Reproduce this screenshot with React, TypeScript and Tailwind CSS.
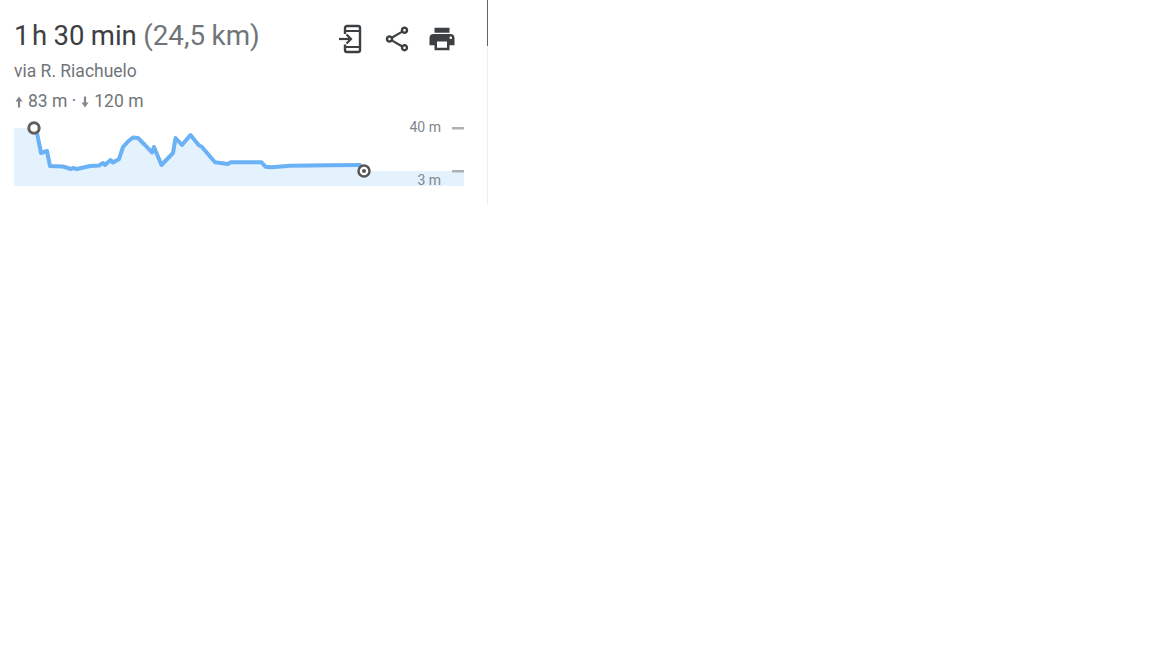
export default function App() {
  const line =
    "37,133 41,153 47,151 50,166 63,166.5 71,169 73,168 77,169 90,166 99,165.5 103,163 105,165 110.5,160 113,162.5 119,159 123,147 128,141.5 133,137.5 138,138 145,145 152,152.5 154,147 161.5,165 173,153 175.5,138 182,145 190.5,135 199,145.5 201.5,146.5 215,162.3 228,164 230.5,162.3 261.5,162.3 265.5,166.7 271.5,167.3 290,165.7 330,165.3 360,165";
  const off = (s: string) =>
    s
      .split(" ")
      .map((p) => {
        const [x, y] = p.split(",").map(Number);
        return `${x - 14},${y - 120}`;
      })
      .join(" ");
  return (
    <div className="w-[1152px] h-[648px] bg-white overflow-hidden font-['Roboto',sans-serif]">
      <div className="flex w-[488px] h-[205px]">
        <div className="flex-1 flex flex-col pl-[14px] pt-[19px]">
          <div className="flex items-start justify-between h-[34px]">
            <div className="text-[27.5px] leading-[34px] text-[#3c4043] whitespace-nowrap [word-spacing:-0.4px]">
              <span className="[word-spacing:-4.4px]">1 h</span> 30 min{" "}
              <span className="text-[#70757a] text-[27.8px]">(24,5 km)</span>
            </div>
            <div className="flex items-center mr-[30px] mt-[4px] gap-[15px] text-[#3c4043]">
              <svg width="24" height="30" viewBox="0 0 24 30" fill="none" className="mr-[4px] mt-[1px]">
                <path d="M6 10V4a2 2 0 0 1 2-2h11a2 2 0 0 1 2 2v22a2 2 0 0 1-2 2H8a2 2 0 0 1-2-2v-5.500" stroke="currentColor" strokeWidth="2.400" />
                <path d="M6 7h15M6 23h15" stroke="currentColor" strokeWidth="2" />
                <path d="M0 15h11" stroke="currentColor" strokeWidth="2.200" />
                <path d="M7.500 10.500 12 15l-4.500 4.500" stroke="currentColor" strokeWidth="2.200" />
              </svg>
              <svg width="30" height="30" viewBox="0 0 24 24" fill="currentColor" className="mt-[1px]">
                <path d="M18 16.08c-.76 0-1.44.3-1.96.77L8.91 12.7c.05-.23.09-.46.09-.7s-.04-.47-.09-.7l7.05-4.11c.54.5 1.25.81 2.04.81 1.66 0 3-1.34 3-3s-1.34-3-3-3-3 1.34-3 3c0 .24.04.47.09.7L8.04 9.81C7.5 9.31 6.79 9 6 9c-1.66 0-3 1.34-3 3s1.34 3 3 3c.79 0 1.5-.31 2.04-.81l7.12 4.16c-.05.21-.08.43-.08.65 0 1.61 1.31 2.92 2.92 2.92s2.92-1.31 2.92-2.92-1.31-2.92-2.92-2.92zM18 4c.55 0 1 .45 1 1s-.45 1-1 1-1-.45-1-1 .45-1 1-1zM6 13c-.55 0-1-.45-1-1s.45-1 1-1 1 .45 1 1-.45 1-1 1zm12 7.020c-.55 0-1-.45-1-1s.45-1 1-1 1 .45 1 1-.45 1-1 1z" />
              </svg>
              <svg width="30" height="30" viewBox="0 0 24 24" fill="currentColor" className="mt-[1px]">
                <path d="M19 8H5c-1.660 0-3 1.340-3 3v6h4v4h12v-4h4v-6c0-1.660-1.340-3-3-3zm-3 11H8v-5h8v5zm3-7c-.55 0-1-.45-1-1s.45-1 1-1 1 .45 1 1-.45 1-1 1zm-1-9H6v4h12V3z" />
              </svg>
            </div>
          </div>
          <div className="mt-[5px] text-[17.5px] leading-[26px] text-[#70757a]">via R. Riachuelo</div>
          <div className="mt-[4px] flex items-center text-[17.5px] leading-[26px] text-[#70757a]">
            <svg width="10" height="14" viewBox="0 0 10 14" fill="#80868b" className="mr-[4px] mt-[2px]">
              <path d="M5 1.500 8.500 6.500H6.100V12.500H3.900V6.500H1.500z" />
            </svg>
            83 m ·
            <svg width="10" height="14" viewBox="0 0 10 14" fill="#80868b" className="mx-[4px] mt-[2px]">
              <path d="M5 12.500 8.500 7.500H6.100V1.500H3.900V7.500H1.500z" />
            </svg>
            120 m
          </div>
          <div className="relative w-[450px] h-[66px] mt-[6px]">
            <svg width="450" height="66" viewBox="0 0 450 66" className="block overflow-visible">
              <polygon
                points={`0,8 ${off("34,128")} ${off(line)} ${off("364,171")} 450,51 450,66 0,66`}
                fill="#e3f2fd"
              />
              <polyline points={off(line)} fill="none" stroke="#6ab1f5" strokeWidth="4" strokeLinejoin="round" strokeLinecap="round" />
              <circle cx="20" cy="8" r="5.200" fill="#fff" stroke="#5f5f5f" strokeWidth="3" />
              <circle cx="350" cy="51" r="5.500" fill="#fff" stroke="#555" strokeWidth="2.500" />
              <circle cx="350" cy="51" r="2" fill="#555" />
              <rect x="438" y="7" width="12" height="2.500" fill="#b0b0b0" />
              <rect x="438" y="50" width="12" height="2.500" fill="#b0b0b0" />
            </svg>
            <span className="absolute right-[23px] top-[-2px] text-[14px] leading-[18px] text-[#80868b]">40 m</span>
            <span className="absolute right-[23px] top-[51px] text-[14px] leading-[18px] text-[#80868b]">3 m</span>
          </div>
        </div>
        <div className="w-px flex flex-col">
          <div className="h-[46px] bg-[#666]" />
          <div className="flex-1 bg-[#eee]" />
        </div>
      </div>
    </div>
  );
}
